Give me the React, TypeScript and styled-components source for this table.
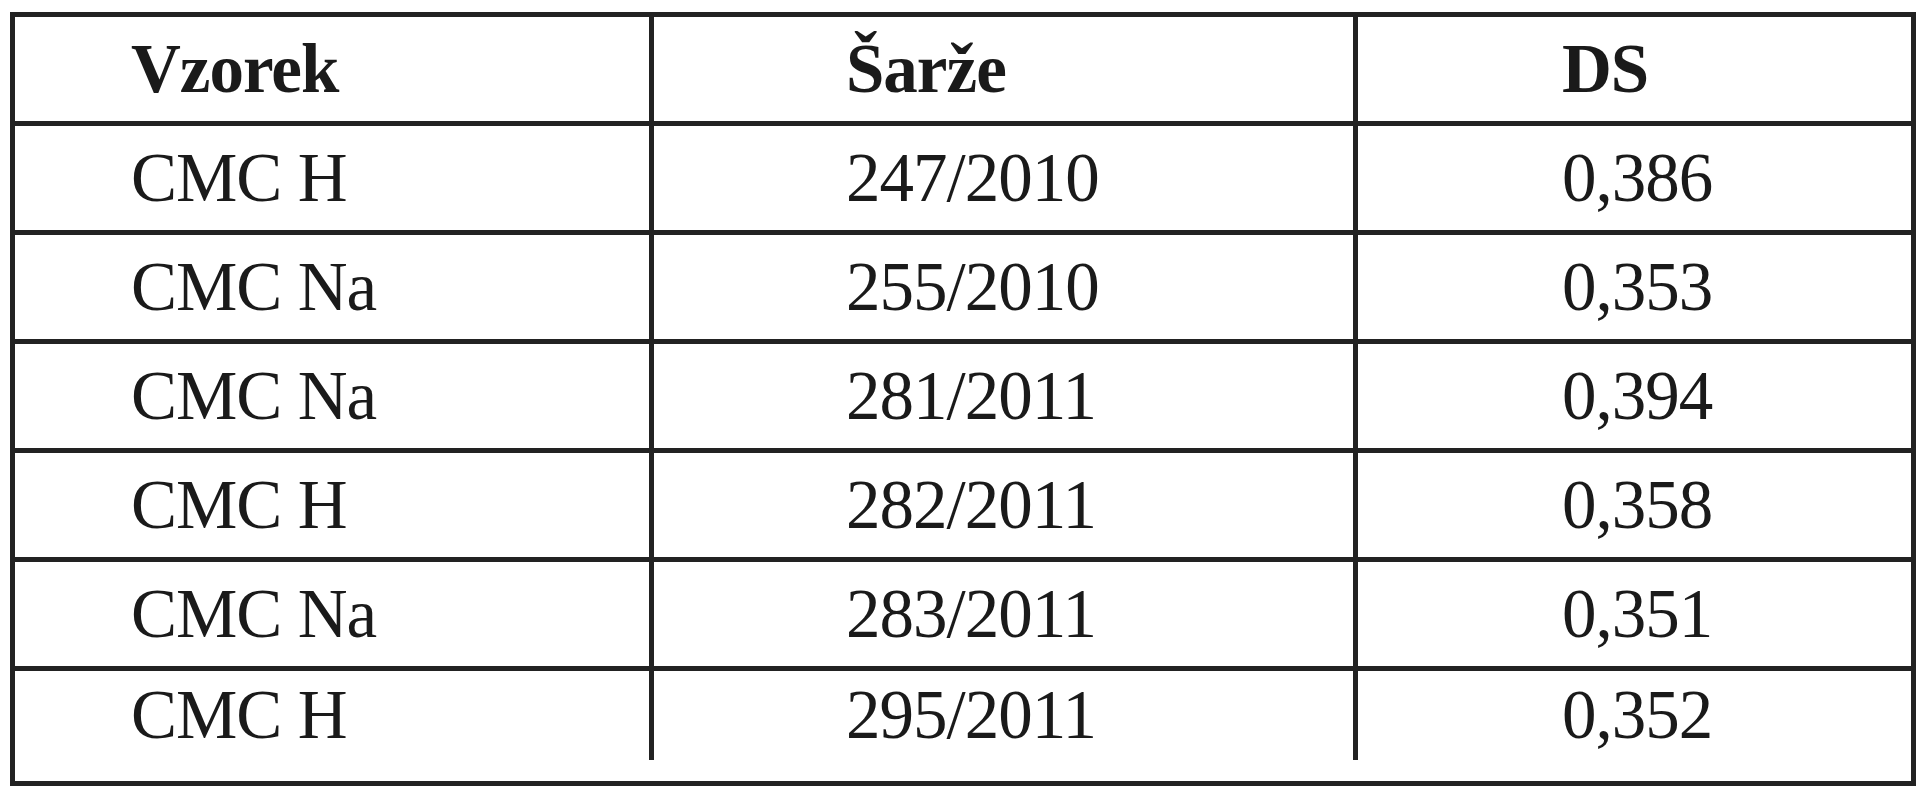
import React, { FC } from "react";
import styled, { createGlobalStyle } from "styled-components";

const GlobalStyle = createGlobalStyle`
  html, body {
    margin: 0;
    padding: 0;
    background: #ffffff;
  }
  body {
    font-family: "Liberation Serif", "Times New Roman", serif;
    color: #1a1a1a;
  }
`;

const rows: [string, string, string][] = [
  ["CMC H", "247/2010", "0,386"],
  ["CMC Na", "255/2010", "0,353"],
  ["CMC Na", "281/2011", "0,394"],
  ["CMC H", "282/2011", "0,358"],
  ["CMC Na", "283/2011", "0,351"],
  ["CMC H", "295/2011", "0,352"],
];

const App: FC = () => {
  return (
    <>
      <GlobalStyle />
      <Page>
        <Frame>
          <Row>
            <Cell $pad={116}>
              <Head>Vzorek</Head>
            </Cell>
            <Cell $pad={192}>
              <Head>Šarže</Head>
            </Cell>
            <Cell $pad={204} $last>
              <Head>DS</Head>
            </Cell>
          </Row>
          {rows.map(([sample, batch, ds], i) => (
            <Row key={i} $final={i === rows.length - 1}>
              <Cell $pad={116}>{sample}</Cell>
              <Cell $pad={192}>{batch}</Cell>
              <Cell $pad={204} $last>
                {ds}
              </Cell>
            </Row>
          ))}
        </Frame>
      </Page>
    </>
  );
};

export default App;

const Page = styled.div`
  padding: 12px 10px 14px 10px;
`;

const Frame = styled.div`
  width: 1906px;
  box-sizing: border-box;
  border: 5px solid #222222;
  padding-bottom: 21px;
`;

const Row = styled.div<{ $final?: boolean }>`
  display: grid;
  grid-template-columns: 639px 704px 1fr;
  height: ${(p) => (p.$final ? "89px" : "104px")};
  border-bottom: ${(p) => (p.$final ? "none" : "5px solid #222222")};
`;

const Cell = styled.div<{ $pad: number; $last?: boolean }>`
  display: flex;
  align-items: center;
  padding-left: ${(p) => p.$pad}px;
  border-right: ${(p) => (p.$last ? "none" : "5px solid #222222")};
  font-size: 69px;
  letter-spacing: -1px;
  line-height: 1;
  white-space: nowrap;
`;

const Head = styled.span`
  font-weight: 700;
`;
